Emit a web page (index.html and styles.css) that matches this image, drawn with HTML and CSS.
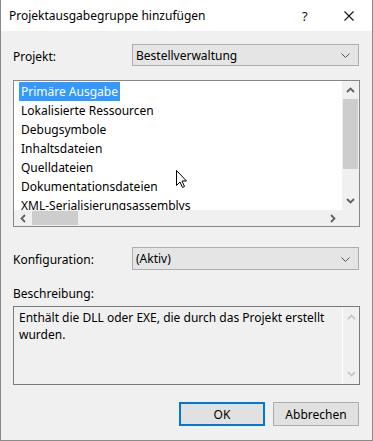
FILE: index.html
```html
<!DOCTYPE html>
<html>
<head>
<meta charset="utf-8">
<link rel="stylesheet" href="styles.css">
</head>
<body>
<div class="window">
  <div class="titlebar">
    <span class="title">Projektausgabegruppe hinzufügen</span>
    <span class="help">?</span>
    <span class="close"><svg width="10" height="10" viewBox="0 0 10 10"><path d="M0.5 0.5 L9.5 9.5 M9.5 0.5 L0.5 9.5" stroke="#111" stroke-width="1.1" fill="none"/></svg></span>
  </div>
  <div class="content">
    <div class="row row-projekt">
      <span class="label">Projekt:</span>
      <div class="combo"><span>Bestellverwaltung</span><svg class="chev" width="9" height="5" viewBox="0 0 9 5"><path d="M0.5 0.5 L4.5 4.5 L8.5 0.5" stroke="#555" stroke-width="1" fill="none"/></svg></div>
    </div>
    <div class="listbox">
      <div class="listarea">
        <ul class="items">
          <li class="sel"><span>Primäre Ausgabe</span></li>
          <li><span>Lokalisierte Ressourcen</span></li>
          <li><span>Debugsymbole</span></li>
          <li><span>Inhaltsdateien</span></li>
          <li><span>Quelldateien</span></li>
          <li><span>Dokumentationsdateien</span></li>
          <li><span>XML-Serialisierungsassemblys</span></li>
        </ul>
        <div class="vscroll">
          <svg class="arr" width="9" height="6" viewBox="0 0 9 6"><path d="M1 5 L4.5 1.5 L8 5" stroke="#606060" stroke-width="1.8" fill="none"/></svg>
          <div class="vtrack"><div class="vthumb"></div></div>
          <svg class="arr" width="9" height="6" viewBox="0 0 9 6"><path d="M1 1 L4.5 4.5 L8 1" stroke="#606060" stroke-width="1.8" fill="none"/></svg>
        </div>
      </div>
      <div class="hrow">
        <div class="hscroll">
          <svg class="harr" width="6" height="9" viewBox="0 0 6 9"><path d="M5 1 L1.5 4.5 L5 8" stroke="#606060" stroke-width="1.8" fill="none"/></svg>
          <div class="htrack"><div class="hthumb"></div></div>
          <svg class="harr" width="6" height="9" viewBox="0 0 6 9"><path d="M1 1 L4.5 4.5 L1 8" stroke="#606060" stroke-width="1.8" fill="none"/></svg>
        </div>
        <div class="corner"></div>
      </div>
      <svg class="cursor" width="12" height="19" viewBox="0 0 12 19"><path d="M0.5 0.5 L0.5 15.5 L4 12 L6.5 17.5 L8.5 16.5 L6 11 L10.5 11 Z" fill="#fff" stroke="#000" stroke-width="1"/></svg>
    </div>
    <div class="row row-konfig">
      <span class="label">Konfiguration:</span>
      <div class="combo combo2"><span>(Aktiv)</span><svg class="chev" width="9" height="5" viewBox="0 0 9 5"><path d="M0.5 0.5 L4.5 4.5 L8.5 0.5" stroke="#555" stroke-width="1" fill="none"/></svg></div>
    </div>
    <div class="desclabel">Beschreibung:</div>
    <div class="descbox">
      <div class="desctext">Enthält die DLL oder EXE, die durch das Projekt erstellt wurden.</div>
      <div class="dscroll">
        <svg width="9" height="6" viewBox="0 0 9 6"><path d="M1 5 L4.5 1.5 L8 5" stroke="#c8c8c8" stroke-width="1.8" fill="none"/></svg>
        <svg width="9" height="6" viewBox="0 0 9 6"><path d="M1 1 L4.5 4.5 L8 1" stroke="#c8c8c8" stroke-width="1.8" fill="none"/></svg>
      </div>
    </div>
    <div class="buttons">
      <div class="btn btn-ok">OK</div>
      <div class="btn">Abbrechen</div>
    </div>
  </div>
</div>
</body>
</html>
```

FILE: styles.css
```css
* { box-sizing: border-box; }
html, body { margin: 0; padding: 0; }
body {
  font-family: "Noto Sans", "Liberation Sans", sans-serif;
  font-size: 12px;
  color: #000;
  background: #f0f0f0;
}
.window {
  width: 373px;
  height: 441px;
  border: 1px solid #8a8a8a;
  border-top: none;
  background: #f0f0f0;
  display: flex;
  flex-direction: column;
}
.titlebar {
  height: 31px;
  background: #fff;
  display: flex;
  align-items: center;
  flex-shrink: 0;
}
.title {
  padding-left: 8px;
  flex: 1;
  font-size: 12px;
  color: #000;
}
.help {
  width: 12px;
  margin-right: 30px;
  font-size: 13px;
  color: #111;
}
.close {
  width: 10px;
  height: 10px;
  margin-right: 18px;
  display: flex;
}
.content {
  padding: 13px 12px 0 12px;
  display: flex;
  flex-direction: column;
  flex: 1;
}
.row {
  display: grid;
  grid-template-columns: 119px 1fr;
  align-items: center;
}
.label { padding-top: 2px; }
.combo {
  height: 22px;
  background: #e5e5e5;
  border: 1px solid #adadad;
  display: flex;
  align-items: center;
  justify-content: space-between;
  padding: 0 8px 0 3px;
  margin-right: 1px;
}
.combo2 { height: 23px; }
.chev { margin-top: 1px; }
.listbox {
  margin-top: 14px;
  height: 147px;
  background: #fff;
  border: 1px solid #828790;
  display: flex;
  flex-direction: column;
  position: relative;
}
.listarea {
  display: flex;
  height: 129px;
}
.items {
  list-style: none;
  margin: 0;
  padding: 1px 0 0 5px;
  flex: 1;
  overflow: hidden;
}
.items li {
  height: 19px;
  line-height: 19px;
}
.items li span {
  display: inline-block;
  padding: 0 2px 0 2px;
}
.items li.sel span {
  background: #3399ff;
  color: #fff;
}
.vscroll {
  width: 17px;
  background: #f0f0f0;
  display: flex;
  flex-direction: column;
  align-items: center;
}
.arr { flex-shrink: 0; margin: 6px 0; }
.vtrack {
  flex: 1;
  width: 100%;
  display: flex;
  flex-direction: column;
}
.vthumb {
  margin: 0 1px;
  height: 70px;
  background: #cdcdcd;
}
.hrow { display: flex; height: 17px; }
.hscroll {
  flex: 1;
  background: #f0f0f0;
  display: flex;
  align-items: center;
}
.harr { flex-shrink: 0; margin: 0 6px; }
.htrack { flex: 1; height: 100%; display: flex; padding: 1px 0; }
.hthumb { width: 46px; background: #cdcdcd; }
.corner { width: 17px; background: #f0f0f0; }
.cursor {
  position: absolute;
  left: 162px;
  top: 89px;
}
.row-konfig { margin-top: 20px; }
.desclabel { margin-top: 14px; height: 20px; line-height: 20px; }
.descbox {
  margin-top: 2px;
  height: 79px;
  border: 1px solid #7a7a7a;
  background: #f0f0f0;
  display: flex;
}
.desctext {
  flex: 1;
  padding: 2px 5px;
  line-height: 17px;
}
.dscroll {
  width: 17px;
  border-left: 1px solid #fff;
  display: flex;
  flex-direction: column;
  justify-content: space-between;
  align-items: center;
  padding: 7px 0 7px;
}
.buttons {
  margin-top: 17px;
  display: flex;
  justify-content: flex-end;
  gap: 8px;
}
.btn {
  width: 86px;
  height: 24px;
  background: #e1e1e1;
  border: 1px solid #adadad;
  display: flex;
  align-items: center;
  justify-content: center;
  margin-right: 1px;
}
.btn-ok {
  border: 2px solid #0078d7;
  margin-right: 0;
}
```
